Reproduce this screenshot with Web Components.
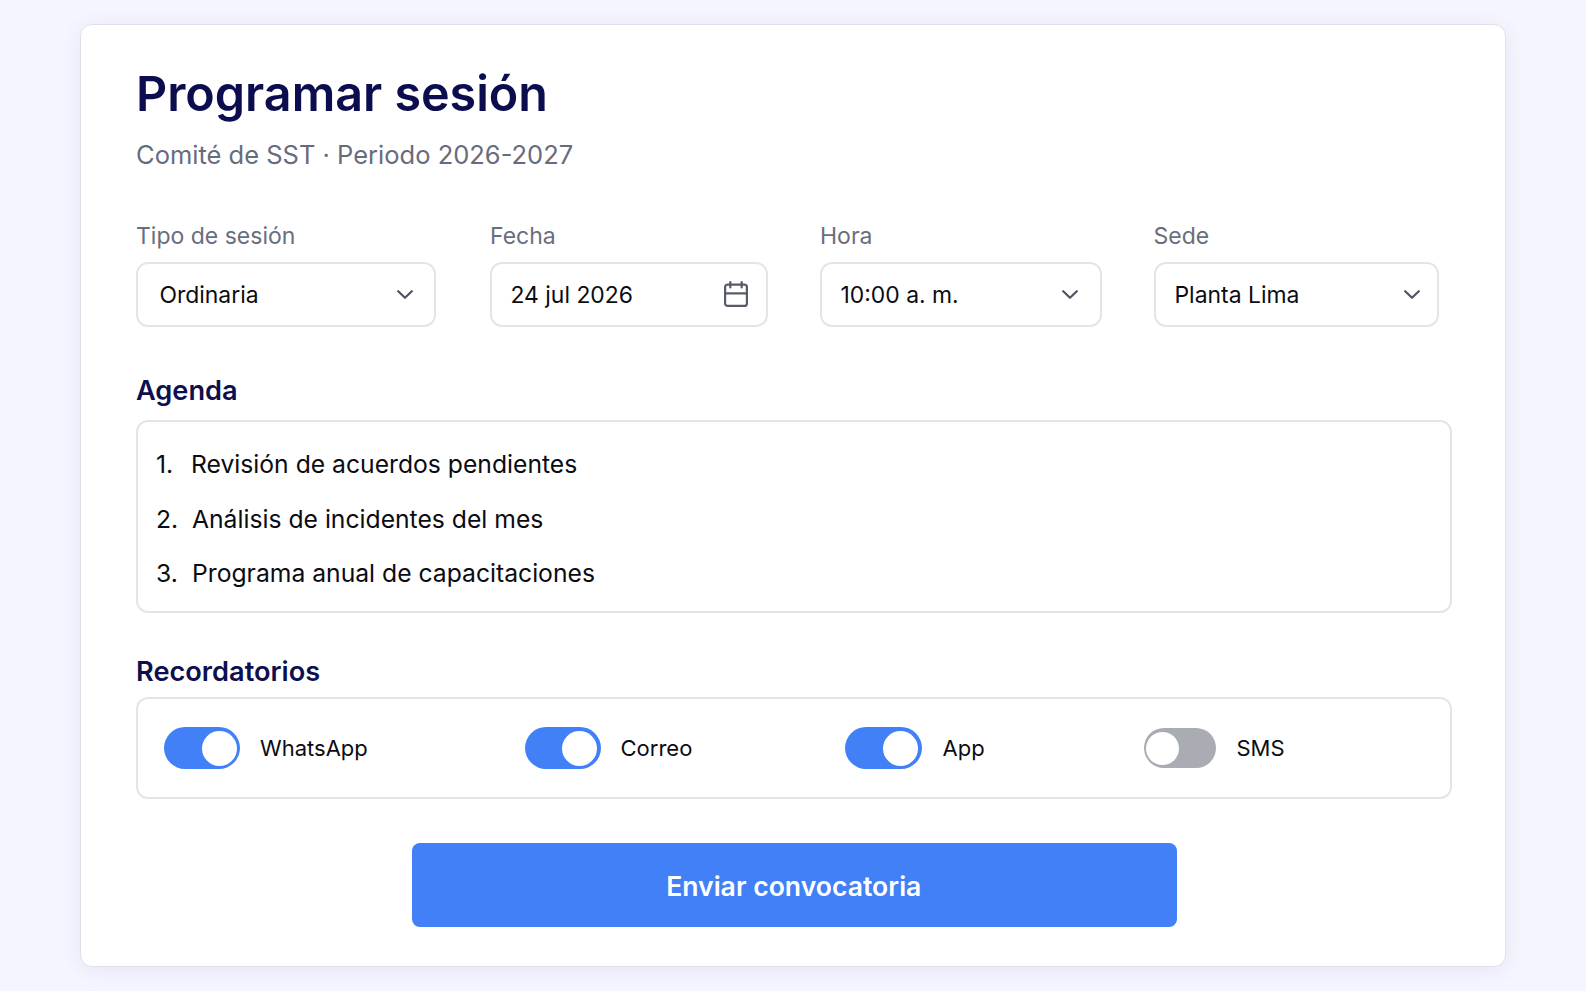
<!DOCTYPE html>
<html lang="es">
<head>
<meta charset="utf-8">
<title>Programar sesión</title>
<style>
  html, body { margin: 0; height: 100%; }
  body {
    background: #f4f5fe;
    font-family: Inter, "Liberation Sans", sans-serif;
    color: #0b0c12;
  }
</style>
</head>
<body>
<session-card>
  <card-header slot="header" title="Programar sesión" subtitle="Comité de SST · Periodo 2026-2027"></card-header>
  <field-row slot="fields">
    <form-field label="Tipo de sesión" value="Ordinaria" icon="chevron" width="299.5" inset="21.5" pad="20.5" gap="54.5"></form-field>
    <form-field label="Fecha" value="24 jul 2026" icon="calendar" width="277.5" inset="18.5" pad="18" gap="52.5"></form-field>
    <form-field label="Hora" value="10:00 a. m." icon="chevron" width="282" inset="18.5" pad="22.5" gap="51.5"></form-field>
    <form-field label="Sede" value="Planta Lima" icon="chevron" width="285.5" inset="19" pad="17.5" gap="0"></form-field>
  </field-row>
  <section-box slot="agenda" heading="Agenda" space="13">
    <agenda-list>
      <agenda-item number="1." text="Revisión de acuerdos pendientes" tight></agenda-item>
      <agenda-item number="2." text="Análisis de incidentes del mes"></agenda-item>
      <agenda-item number="3." text="Programa anual de capacitaciones"></agenda-item>
    </agenda-list>
  </section-box>
  <section-box slot="reminders" heading="Recordatorios" space="9">
    <reminder-row>
      <reminder-toggle label="WhatsApp" on track="76.5"></reminder-toggle>
      <reminder-toggle label="Correo" on track="76"></reminder-toggle>
      <reminder-toggle label="App" on gap="21"></reminder-toggle>
      <reminder-toggle label="SMS" gap="21"></reminder-toggle>
    </reminder-row>
  </section-box>
  <send-button slot="action">Enviar convocatoria</send-button>
</session-card>

<script>
class SessionCard extends HTMLElement {
  constructor() {
    super();
    this.attachShadow({ mode: "open" });
    this.shadowRoot.innerHTML = `
      <style>
        :host {
          display: block;
          box-sizing: border-box;
          width: 1425.5px;
          height: 943px;
          margin: 23.5px 0 0 80px;
          padding: 40.5px 53px 0 55px;
          background: #fff;
          border: 1px solid #dfe0e9;
          border-radius: 12px;
          box-shadow: 0 3px 20px rgba(60, 66, 130, 0.08);
        }
        .fields { margin-top: 51px; }
        .agenda { margin-top: 48px; }
        .reminders { margin-top: 43px; }
        .action { margin-top: 44px; }
      </style>
      <slot name="header"></slot>
      <div class="fields"><slot name="fields"></slot></div>
      <div class="agenda"><slot name="agenda"></slot></div>
      <div class="reminders"><slot name="reminders"></slot></div>
      <div class="action"><slot name="action"></slot></div>
    `;
  }
}

class CardHeader extends HTMLElement {
  constructor() {
    super();
    this.attachShadow({ mode: "open" });
  }

  connectedCallback() {
    this.shadowRoot.innerHTML = `
      <style>
        :host { display: block; }
        h1 {
          margin: 0;
          font-size: 48.4px;
          line-height: 58px;
          font-weight: 600;
          color: #0c0d4e;
        }
        p {
          margin: 15.5px 0 0;
          font-size: 25.5px;
          line-height: 32px;
          color: #676c7c;
        }
      </style>
      <h1>${this.getAttribute("title")}</h1>
      <p>${this.getAttribute("subtitle")}</p>
    `;
  }
}

class FieldRow extends HTMLElement {
  constructor() {
    super();
    this.attachShadow({ mode: "open" });
    this.shadowRoot.innerHTML = `
      <style>:host { display: flex; }</style>
      <slot></slot>
    `;
  }
}

const ICONS = {
  chevron: `<svg width="16" height="9" viewBox="0 0 16 9" fill="none" stroke="#4e5461" stroke-width="2.2" stroke-linecap="round" stroke-linejoin="round"><path d="M1.2 1.2 8 7.8l6.8-6.6"/></svg>`,
  calendar: `<svg width="24" height="26" viewBox="0 0 24 26" fill="none" stroke="#565c6a" stroke-width="2.2" stroke-linecap="round" stroke-linejoin="round"><rect x="1.1" y="3.6" width="21.8" height="21.3" rx="2.5"/><path d="M1.1 12.3h21.8M6.3 1.1v5.4M17.7 1.1v5.4"/></svg>`
};

class FormField extends HTMLElement {
  constructor() {
    super();
    this.attachShadow({ mode: "open" });
  }

  connectedCallback() {
    const icon = this.getAttribute("icon");
    this.style.width = this.getAttribute("width") + "px";
    this.style.marginRight = this.getAttribute("gap") + "px";
    this.shadowRoot.innerHTML = `
      <style>
        :host { display: block; flex: none; }
        label {
          display: block;
          font-size: 23px;
          line-height: 28px;
          color: #696e7d;
          margin-bottom: 12px;
        }
        .box {
          box-sizing: border-box;
          height: 65px;
          display: flex;
          align-items: center;
          justify-content: space-between;
          padding: 0 ${this.getAttribute("pad")}px 0 ${this.getAttribute("inset")}px;
          border: 2px solid #e4e5ea;
          border-radius: 12px;
          background: #fff;
          font-size: 22.9px;
          color: #0b0c12;
        }
        .box span { padding-top: 2px; }
        svg { display: block; flex: none; }
      </style>
      <label>${this.getAttribute("label")}</label>
      <div class="box"><span>${this.getAttribute("value")}</span>${ICONS[icon]}</div>
    `;
  }
}

class SectionBox extends HTMLElement {
  constructor() {
    super();
    this.attachShadow({ mode: "open" });
  }

  connectedCallback() {
    this.shadowRoot.innerHTML = `
      <style>
        :host { display: block; }
        h2 {
          margin: 0 0 ${this.getAttribute("space")}px;
          font-size: 27.2px;
          line-height: 32px;
          font-weight: 600;
          color: #0e0f50;
        }
        .box {
          border: 2px solid #e4e5ea;
          border-radius: 12px;
          background: #fff;
        }
      </style>
      <h2>${this.getAttribute("heading")}</h2>
      <div class="box"><slot></slot></div>
    `;
  }
}

class AgendaList extends HTMLElement {
  constructor() {
    super();
    this.attachShadow({ mode: "open" });
    this.shadowRoot.innerHTML = `
      <style>
        :host {
          display: flex;
          flex-direction: column;
          gap: 24px;
          padding: 27.5px 18px 22.5px;
        }
      </style>
      <slot></slot>
    `;
  }
}

class AgendaItem extends HTMLElement {
  constructor() {
    super();
    this.attachShadow({ mode: "open" });
  }

  connectedCallback() {
    const numWidth = this.hasAttribute("tight") ? 35 : 36;
    this.shadowRoot.innerHTML = `
      <style>
        :host {
          display: flex;
          font-size: 24.7px;
          line-height: 30.5px;
          color: #0b0c12;
        }
        .num { flex: none; width: ${numWidth}px; }
      </style>
      <span class="num">${this.getAttribute("number")}</span>
      <span>${this.getAttribute("text")}</span>
    `;
  }
}

class ReminderRow extends HTMLElement {
  constructor() {
    super();
    this.attachShadow({ mode: "open" });
    this.shadowRoot.innerHTML = `
      <style>
        :host {
          display: grid;
          grid-template-columns: 361px 320px 299px 1fr;
          align-items: center;
          height: 98px;
          padding-left: 25.5px;
        }
      </style>
      <slot></slot>
    `;
  }
}

class ReminderToggle extends HTMLElement {
  constructor() {
    super();
    this.attachShadow({ mode: "open" });
  }

  connectedCallback() {
    const on = this.hasAttribute("on");
    const trackWidth = this.getAttribute("track") || (on ? 77 : 72);
    this.shadowRoot.innerHTML = `
      <style>
        :host {
          display: flex;
          align-items: center;
          gap: ${this.getAttribute("gap") || 20}px;
          font-size: 22px;
          color: #0b0c12;
        }
        .track {
          box-sizing: border-box;
          flex: none;
          display: flex;
          align-items: center;
          justify-content: ${on ? "flex-end" : "flex-start"};
          width: ${trackWidth}px;
          height: ${on ? 42 : 40}px;
          padding: 0 ${on ? 3.5 : 2.5}px;
          border-radius: 22px;
          background: ${on ? "#4280f8" : "#a9acb3"};
        }
        .knob {
          width: ${on ? 35 : 33}px;
          height: ${on ? 35 : 33}px;
          border-radius: 50%;
          background: #fff;
        }
      </style>
      <span class="track"><span class="knob"></span></span>
      <span>${this.getAttribute("label")}</span>
    `;
  }
}

class SendButton extends HTMLElement {
  constructor() {
    super();
    this.attachShadow({ mode: "open" });
    this.shadowRoot.innerHTML = `
      <style>
        :host { display: flex; justify-content: center; }
        button {
          width: 765px;
          height: 84px;
          margin-left: 2px;
          padding: 2px 2px 0 0;
          border: 0;
          border-radius: 8px;
          background: #4280f8;
          color: #fff;
          font: 600 26.6px Inter, "Liberation Sans", sans-serif;
        }
      </style>
      <button type="button"><slot></slot></button>
    `;
  }
}

customElements.define("session-card", SessionCard);
customElements.define("card-header", CardHeader);
customElements.define("field-row", FieldRow);
customElements.define("form-field", FormField);
customElements.define("section-box", SectionBox);
customElements.define("agenda-list", AgendaList);
customElements.define("agenda-item", AgendaItem);
customElements.define("reminder-row", ReminderRow);
customElements.define("reminder-toggle", ReminderToggle);
customElements.define("send-button", SendButton);
</script>
</body>
</html>
